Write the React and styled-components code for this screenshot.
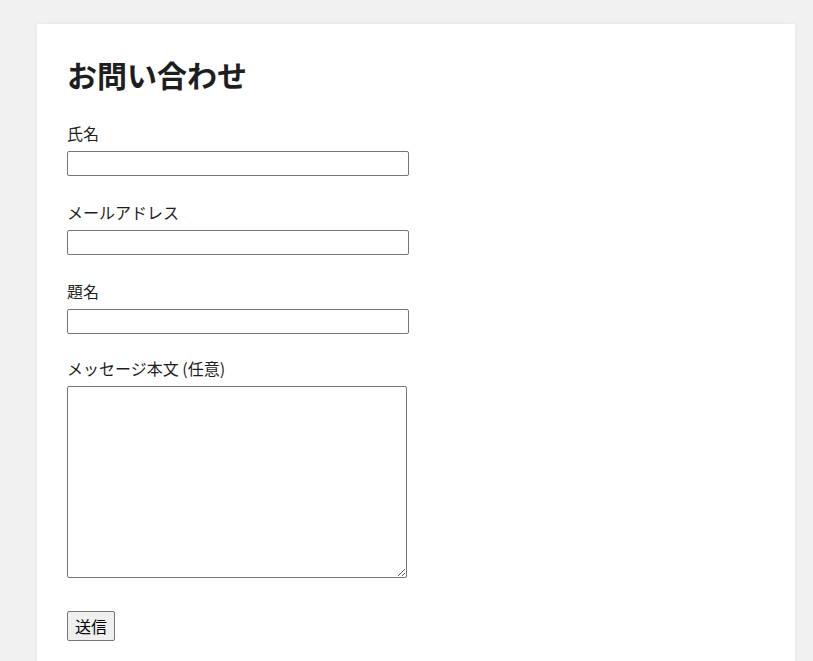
import styled, { createGlobalStyle } from "styled-components";

const GlobalStyle = createGlobalStyle`
  html, body {
    margin: 0;
    padding: 0;
    background: #f1f1f1;
  }
  body {
    font-family: "Noto Sans CJK JP", "Noto Sans", sans-serif;
    color: #1e1e1e;
  }
`;

const Page = styled.div`
  padding: 24px 18px 0 37px;
  min-height: 661px;
  box-sizing: border-box;
`;

const Card = styled.main`
  width: 758px;
  min-height: 700px;
  box-sizing: border-box;
  background: #fff;
  padding: 32px 30px;
  box-shadow: 0 0 4px rgba(0, 0, 0, 0.06);
`;

const Title = styled.h1`
  margin: 0 0 29px;
  font-size: 30px;
  line-height: 36px;
  font-weight: 700;
  color: #1e1e1e;
`;

const Field = styled.div`
  margin-bottom: ${({ $gap }) => ($gap ?? 24)}px;
`;

const Label = styled.label`
  display: block;
  font-size: 16px;
  line-height: 24px;
  margin-bottom: 6px;
  color: #1e1e1e;
`;

const TextInput = styled.input`
  display: block;
  box-sizing: border-box;
  width: 342px;
  height: 25px;
  margin: 0;
  padding: 1px 2px;
  border: 1px solid #767676;
  border-radius: 2px;
  background: #fff;
  font: inherit;
  font-size: 16px;
`;

const TextArea = styled.textarea`
  display: block;
  box-sizing: border-box;
  width: 340px;
  height: 192px;
  margin: 0;
  padding: 2px;
  border: 1px solid #767676;
  border-radius: 2px;
  background: #fff;
  font: inherit;
  font-size: 16px;
`;

const SubmitButton = styled.button`
  display: block;
  margin-top: 33px;
  box-sizing: border-box;
  height: 30px;
  padding: 0 7px;
  border: 1px solid #767676;
  border-radius: 2px;
  background: #efefef;
  color: #000;
  font-family: "Noto Sans CJK JP", sans-serif;
  font-size: 16px;
  line-height: 26px;
`;

export default function App() {
  return (
    <>
      <GlobalStyle />
      <Page>
        <Card>
          <Title>お問い合わせ</Title>
          <form onSubmit={(e) => e.preventDefault()}>
            <Field>
              <Label htmlFor="name">氏名</Label>
              <TextInput id="name" type="text" />
            </Field>
            <Field>
              <Label htmlFor="email">メールアドレス</Label>
              <TextInput id="email" type="email" />
            </Field>
            <Field $gap={22}>
              <Label htmlFor="subject">題名</Label>
              <TextInput id="subject" type="text" />
            </Field>
            <Field $gap={0}>
              <Label htmlFor="message">メッセージ本文 (任意)</Label>
              <TextArea id="message" />
            </Field>
            <SubmitButton type="submit">送信</SubmitButton>
          </form>
        </Card>
      </Page>
    </>
  );
}
